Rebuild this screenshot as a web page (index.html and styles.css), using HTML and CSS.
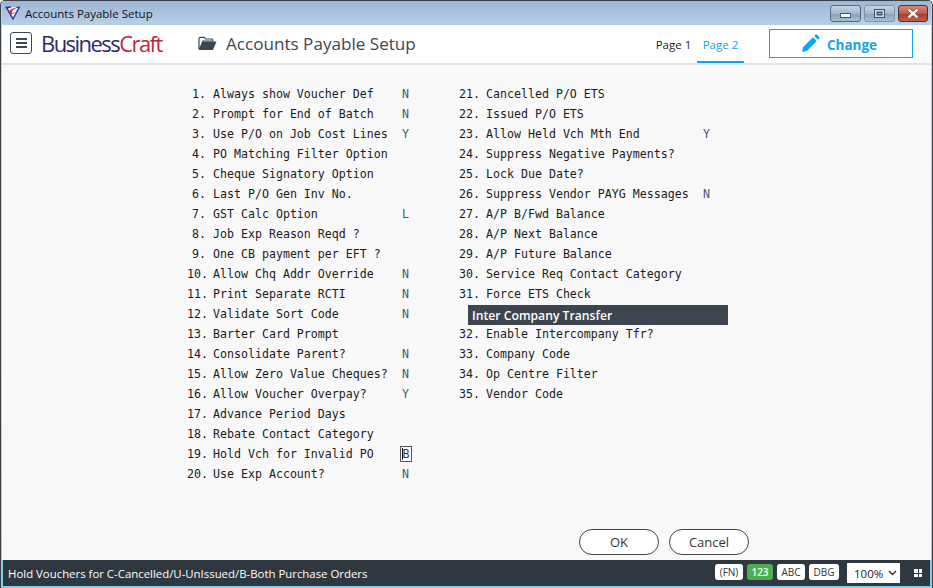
FILE: index.html
```html
<!DOCTYPE html>
<html lang="en">
<head>
<meta charset="utf-8">
<title>Accounts Payable Setup</title>
<link rel="stylesheet" href="styles.css">
</head>
<body>
<div class="window">
  <header class="titlebar">
    <svg class="app-icon" width="16" height="16" viewBox="0 0 16 16">
      <path d="M0 1.500h15.500L8 15.500z" fill="#2a3f9a"/>
      <path d="M3 3h10L8 12.500z" fill="#fff"/>
      <path d="M7 1.500h6L4.500 6.500 3.500 4.500z" fill="#e8eef8"/>
      <path d="M12.500 2.500C8 3 3.500 5 4.500 8c.7 1.500 3.500 1.400 6.500-.9-2.200.9-3.800 1.100-4.200.3C6.300 6.300 9 4 12.500 2.500z" fill="#d8202c"/>
    </svg>
    <span class="title-text">Accounts Payable Setup</span>
    <div class="win-buttons">
      <div class="win-btn"><span class="glyph-min"></span></div>
      <div class="win-btn"><span class="glyph-max"></span></div>
      <div class="win-btn close">
        <svg width="14" height="11" viewBox="0 0 14 11"><path d="M2.500 1.500l9 8M11.500 1.500l-9 8" stroke="#6d2a20" stroke-width="3.600"/><path d="M2.500 1.500l9 8M11.500 1.500l-9 8" stroke="#f4f4f4" stroke-width="2.400"/></svg>
      </div>
    </div>
  </header>
  <nav class="toolbar">
    <div class="menu-btn"><span></span><span></span><span></span></div>
    <div class="logo"><span class="logo-a">Business</span><span class="logo-b">Craft</span></div>
    <svg class="folder" width="19" height="15" viewBox="0 0 19 15">
      <path d="M1 13V2.500C1 1.800 1.500 1.300 2.200 1.300h4l1.500 1.700h6.100c.6 0 1 .4 1 1V5H5L1.800 13z" fill="none" stroke="#3d4750" stroke-width="1.200"/>
      <path d="M4.500 5.500H18.500L15 14H1z" fill="#3d4750"/>
    </svg>
    <h1 class="page-title">Accounts Payable Setup</h1>
    <div class="tabs">
      <div class="tab">Page 1</div>
      <div class="tab active">Page 2</div>
    </div>
    <button class="change-btn">
      <svg width="19" height="19" viewBox="0 0 19 19"><path d="M1 18l1.200-5L12 3.200 15.800 7 6 16.800zM13.200 2l1-1c.6-.6 1.400-.6 2 0l1.800 1.800c.6.600.6 1.400 0 2l-1 1z" fill="#0ea5ee"/></svg>
      <span class="change-label">Change</span>
    </button>
  </nav>
  <main class="content">
    <div class="form">
      <div class="column col-left">
        <div class="row"><span class="num">1.</span><span class="label">Always show Voucher Def</span><span class="val">N</span></div>
        <div class="row"><span class="num">2.</span><span class="label">Prompt for End of Batch</span><span class="val">N</span></div>
        <div class="row"><span class="num">3.</span><span class="label">Use P/O on Job Cost Lines</span><span class="val">Y</span></div>
        <div class="row"><span class="num">4.</span><span class="label">PO Matching Filter Option</span><span class="val"></span></div>
        <div class="row"><span class="num">5.</span><span class="label">Cheque Signatory Option</span><span class="val"></span></div>
        <div class="row"><span class="num">6.</span><span class="label">Last P/O Gen Inv No.</span><span class="val"></span></div>
        <div class="row"><span class="num">7.</span><span class="label">GST Calc Option</span><span class="val">L</span></div>
        <div class="row"><span class="num">8.</span><span class="label">Job Exp Reason Reqd ?</span><span class="val"></span></div>
        <div class="row"><span class="num">9.</span><span class="label">One CB payment per EFT ?</span><span class="val"></span></div>
        <div class="row"><span class="num">10.</span><span class="label">Allow Chq Addr Override</span><span class="val">N</span></div>
        <div class="row"><span class="num">11.</span><span class="label">Print Separate RCTI</span><span class="val">N</span></div>
        <div class="row"><span class="num">12.</span><span class="label">Validate Sort Code</span><span class="val">N</span></div>
        <div class="row"><span class="num">13.</span><span class="label">Barter Card Prompt</span><span class="val"></span></div>
        <div class="row"><span class="num">14.</span><span class="label">Consolidate Parent?</span><span class="val">N</span></div>
        <div class="row"><span class="num">15.</span><span class="label">Allow Zero Value Cheques?</span><span class="val">N</span></div>
        <div class="row"><span class="num">16.</span><span class="label">Allow Voucher Overpay?</span><span class="val">Y</span></div>
        <div class="row"><span class="num">17.</span><span class="label">Advance Period Days</span><span class="val"></span></div>
        <div class="row"><span class="num">18.</span><span class="label">Rebate Contact Category</span><span class="val"></span></div>
        <div class="row"><span class="num">19.</span><span class="label">Hold Vch for Invalid PO</span><span class="val"><span class="input-box">B</span></span></div>
        <div class="row"><span class="num">20.</span><span class="label">Use Exp Account?</span><span class="val">N</span></div>
      </div>
      <div class="column col-right">
        <div class="row"><span class="num">21.</span><span class="label">Cancelled P/O ETS</span><span class="val"></span></div>
        <div class="row"><span class="num">22.</span><span class="label">Issued P/O ETS</span><span class="val"></span></div>
        <div class="row"><span class="num">23.</span><span class="label">Allow Held Vch Mth End</span><span class="val">Y</span></div>
        <div class="row"><span class="num">24.</span><span class="label">Suppress Negative Payments?</span><span class="val"></span></div>
        <div class="row"><span class="num">25.</span><span class="label">Lock Due Date?</span><span class="val"></span></div>
        <div class="row"><span class="num">26.</span><span class="label">Suppress Vendor PAYG Messages</span><span class="val">N</span></div>
        <div class="row"><span class="num">27.</span><span class="label">A/P B/Fwd Balance</span><span class="val"></span></div>
        <div class="row"><span class="num">28.</span><span class="label">A/P Next Balance</span><span class="val"></span></div>
        <div class="row"><span class="num">29.</span><span class="label">A/P Future Balance</span><span class="val"></span></div>
        <div class="row"><span class="num">30.</span><span class="label">Service Req Contact Category</span><span class="val"></span></div>
        <div class="row"><span class="num">31.</span><span class="label">Force ETS Check</span><span class="val"></span></div>
        <div class="section-head">Inter Company Transfer</div>
        <div class="row"><span class="num">32.</span><span class="label">Enable Intercompany Tfr?</span><span class="val"></span></div>
        <div class="row"><span class="num">33.</span><span class="label">Company Code</span><span class="val"></span></div>
        <div class="row"><span class="num">34.</span><span class="label">Op Centre Filter</span><span class="val"></span></div>
        <div class="row"><span class="num">35.</span><span class="label">Vendor Code</span><span class="val"></span></div>
      </div>
    </div>
    <div class="actions">
      <button class="pill">OK</button>
      <button class="pill">Cancel</button>
    </div>
  </main>
  <footer class="statusbar">
    <span class="status-text">Hold Vouchers for C-Cancelled/U-UnIssued/B-Both Purchase Orders</span>
    <div class="status-right">
      <span class="chip chip-fn">(FN)</span>
      <span class="chip chip-on">123</span>
      <span class="chip chip-abc">ABC</span>
      <span class="chip chip-dbg">DBG</span>
      <div class="zoom-select">100%
        <svg width="9" height="6" viewBox="0 0 9 6"><path d="M1 1l3.500 3.500L8 1" fill="none" stroke="#333" stroke-width="1.400"/></svg>
      </div>
      <div class="grip"><i></i><i></i><i></i><i></i></div>
    </div>
  </footer>
</div>
</body>
</html>
```

FILE: styles.css
```css
* { box-sizing: border-box; }
html, body { margin: 0; padding: 0; }
body {
  width: 933px;
  height: 588px;
  overflow: hidden;
  background: #fff;
  font-family: "Open Sans", "Noto Sans", sans-serif;
}
.window {
  width: 933px;
  height: 588px;
  display: flex;
  flex-direction: column;
  background: linear-gradient(#b9d0ea 0%, #b4d4ea 60%, #7fd0ea 100%);
  border: 1px solid #3a4148;
  border-bottom: 0;
  border-radius: 5px 5px 0 0;
  padding: 0 1px 2px 1px;
}
.titlebar {
  height: 24px;
  display: flex;
  align-items: center;
  padding-left: 3px;
  background: linear-gradient(#9db5d2, #b9d0ea);
  flex: none;
}
.app-icon { flex: none; }
.title-text {
  margin-left: 4px;
  font-size: 11.500px;
  color: #111;
}
.win-buttons {
  margin-left: auto;
  display: flex;
  gap: 3px;
  align-self: flex-start;
  margin-top: 4px;
  margin-right: 3px;
}
.win-btn {
  width: 31px;
  height: 17px;
  border: 1px solid #56677c;
  border-radius: 3px;
  background: linear-gradient(#c4d3e4 0%, #a4b8cf 50%, #8ba2bd 55%, #aabed4 100%);
  display: flex;
  align-items: center;
  justify-content: center;
}
.win-btn:nth-child(2) { border-color: #7e92a9; }
.win-btn.close {
  width: 30px;
  border-color: #5a2a2a;
  background: linear-gradient(#d88a78 0%, #c05a48 50%, #a83c2c 55%, #c06050 100%);
}
.glyph-min {
  width: 11px;
  height: 5px;
  margin-top: 4px;
  background: #fff;
  border: 1px solid #46566a;
}
.glyph-max {
  width: 11px;
  height: 9px;
  background: transparent;
  border: 1px solid #46566a;
  box-shadow: inset 0 0 0 1.500px #cfdbe8, inset 0 0 0 3px #46566a;
}
.toolbar {
  height: 40px;
  flex: none;
  display: flex;
  align-items: center;
  background: #fff;
  border-bottom: 2px solid #e2e2e2;
  padding-left: 8px;
  padding-right: 18px;
}
.menu-btn {
  width: 22px;
  height: 22px;
  border: 1px solid #3d4750;
  border-radius: 3px;
  display: flex;
  flex-direction: column;
  align-items: center;
  justify-content: center;
  gap: 2px;
  margin-bottom: 2px;
}
.menu-btn span {
  width: 11px;
  height: 2px;
  background: #3d4750;
}
.logo {
  margin-left: 9px;
  width: 124px;
  font-family: "Open Sans", sans-serif;
  font-size: 22px;
  letter-spacing: -1.550px;
  line-height: 26px;
  margin-bottom: 2px;
}
.logo-a { color: #2c2a6e; }
.logo-b { color: #c0263c; }
.folder { margin-left: 33px; margin-bottom: 2px; flex: none; }
.page-title {
  margin: 0 0 2px 9px;
  font-size: 17.100px;
  font-weight: 400;
  color: #3d4750;
}
.tabs {
  margin-left: auto;
  display: flex;
  height: 38px;
}
.tab {
  width: 47px;
  font-size: 11.500px;
  line-height: 40px;
  text-align: center;
  color: #222;
}
.tab.active {
  color: #0ea5ee;
  border-bottom: 2px solid #0ea5ee;
}
.change-btn {
  margin-left: 25px;
  width: 144px;
  height: 29px;
  margin-bottom: 2px;
  background: #fff;
  border: 1px solid #0ea5ee;
  color: #0ea5ee;
  font-family: "Open Sans", sans-serif;
  font-size: 13.500px;
  font-weight: 700;
  display: flex;
  align-items: center;
  justify-content: center;
  gap: 7px;
  padding: 0 4px 0 0;
}
.change-label { padding-top: 3px; }
.content {
  flex: 1;
  background: #f8f8f8;
  display: flex;
  flex-direction: column;
  padding-top: 19px;
  min-height: 0;
}
.form {
  display: flex;
  flex: 1;
  min-height: 0;
  padding-left: 185px;
}
.column { display: flex; flex-direction: column; }
.col-left { width: 272px; }
.col-right { width: 300px; }
.row {
  display: flex;
  height: 20px;
  align-items: center;
  font-family: "DejaVu Sans Mono", monospace;
  font-size: 11.620px;
  color: #1a1a1a;
  white-space: pre;
}
.num { width: 27px; flex: none; }
.col-left .num { text-align: right; width: 19px; margin-right: 7px; }
.label { flex: none; }
.col-left .label { width: 188px; }
.col-right .label { width: 216px; }
.val {
  flex: none;
  color: #3f5a78;
  padding-left: 1px;
  position: relative;
}
.input-box {
  display: inline-block;
  margin-left: -2px;
  width: 12px;
  height: 16px;
  line-height: 14px;
  border: 1px solid #555;
  background: #fff;
  color: #333;
  text-align: center;
  position: relative;
}
.input-box::before {
  content: "";
  position: absolute;
  left: 1px;
  top: 1px;
  width: 1px;
  height: 12px;
  background: #111;
}
.section-head {
  height: 20px;
  margin: 1px 0 -1px 9px;
  width: 260px;
  padding-left: 4px;
  line-height: 21px;
  background: #3d4650;
  color: #fff;
  font-size: 12.200px;
  font-weight: 600;
}
.actions {
  flex: none;
  display: flex;
  justify-content: flex-end;
  gap: 10px;
  padding-right: 182px;
  padding-bottom: 5px;
}
.pill {
  width: 80px;
  height: 26px;
  border: 1px solid #444;
  border-radius: 13px;
  background: #fff;
  color: #333;
  font-family: "Open Sans", sans-serif;
  font-size: 13px;
  padding: 0;
}
.statusbar {
  height: 26px;
  flex: none;
  display: flex;
  align-items: center;
  background: #2f3841;
  margin: 0 1px;
  padding-left: 5px;
  color: #fff;
}
.status-text { font-size: 11.400px; }
.status-right {
  margin-left: auto;
  display: flex;
  align-items: center;
}
.chip {
  height: 16px;
  line-height: 16px;
  border-radius: 3px;
  background: #fff;
  color: #333;
  font-size: 10px;
  text-align: center;
  margin-bottom: 2px;
}
.chip-fn { width: 28px; }
.chip-on { width: 26px; margin-left: 4px; background: #4caf50; color: #fff; font-weight: 600; }
.chip-abc { width: 28px; margin-left: 4px; }
.chip-dbg { width: 30px; margin-left: 4px; }
.zoom-select {
  margin-left: 8px;
  width: 53px;
  height: 20px;
  background: #fff;
  color: #222;
  font-size: 11.500px;
  padding-left: 7px;
  display: flex;
  align-items: center;
  gap: 5px;
}
.grip {
  margin-left: 14px;
  margin-right: 8px;
  display: grid;
  grid-template-columns: 3.500px 3.500px;
  grid-auto-rows: 3.500px;
  gap: 1px;
}
.grip i { background: #fff; }
```
